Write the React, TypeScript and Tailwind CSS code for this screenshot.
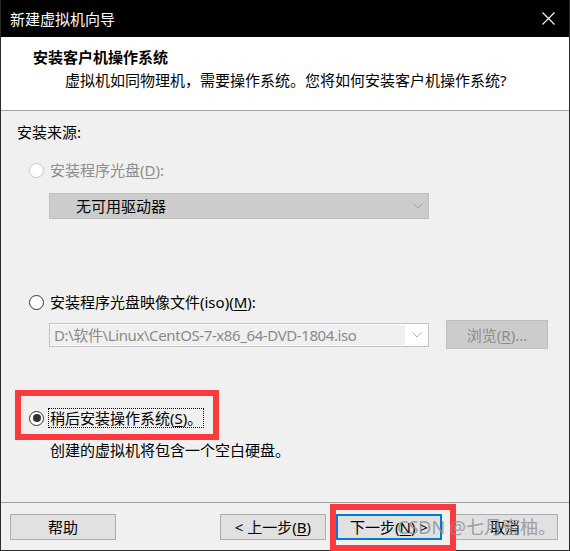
import React from "react";

const Radio = ({ checked = false, disabled = false }: { checked?: boolean; disabled?: boolean }) => (
    <span
        className={
            "flex h-[15px] w-[15px] shrink-0 items-center justify-center rounded-full border bg-white " +
            (disabled ? "border-[#c6c6c6]" : "border-[#333333]")
        }
    >
        {checked && <span className="h-[8px] w-[8px] rounded-full bg-[#333333]"></span>}
    </span>
);

const Chevron = ({ color }: { color: string }) => (
    <svg width="10" height="6" viewBox="0 0 10 6" fill="none" stroke={color} strokeWidth="1">
        <path d="M0.5 0.5 L5 5 L9.5 0.5" />
    </svg>
);

const Button = ({ children, focused = false }: { children: React.ReactNode; focused?: boolean }) => (
    <div
        className={
            "flex h-[26px] w-[106px] items-center justify-center bg-[#e1e1e1] text-black " +
            (focused ? "border-2 border-[#0078d7]" : "border border-[#adadad]")
        }
    >
        {children}
    </div>
);

export default function App() {
    return (
        <div
            className="relative flex h-[551px] w-[570px] flex-col border-x border-b border-[#2b2b2b] bg-[#f0f0f0] text-[15px] leading-[20px] text-black"
            style={{ fontFamily: '"Noto Sans", "Noto Sans CJK SC", sans-serif' }}
        >
            {/* title bar */}
            <div className="flex h-[37px] shrink-0 items-center justify-between bg-black pl-[9px] pr-[14px] text-white">
                <span>新建虚拟机向导</span>
                <svg width="13" height="13" viewBox="0 0 13 13" stroke="white" strokeWidth="1.1">
                    <path d="M0.5 0.5 L12.5 12.5 M12.5 0.5 L0.5 12.5" />
                </svg>
            </div>

            {/* header */}
            <div className="flex h-[74px] shrink-0 flex-col border-b border-[#a0a0a0] bg-white pt-[10px]">
                <p className="pl-[32px] font-bold">安装客户机操作系统</p>
                <p className="mt-[3px] pl-[64px]">虚拟机如同物理机，需要操作系统。您将如何安装客户机操作系统?</p>
            </div>

            {/* body */}
            <div className="flex flex-1 flex-col">
                <p className="mt-[11px] pl-[16px]">安装来源:</p>

                <div className="mt-[18px] flex items-center gap-[6px] pl-[28px] text-[#8c8c8c]">
                    <Radio disabled />
                    <span>
                        安装程序光盘(<span className="underline underline-offset-2">D</span>):
                    </span>
                </div>

                <div className="ml-[48px] mt-[13px] flex h-[26px] w-[380px] items-center justify-between border border-[#bfbfbf] bg-[#cccccc] pl-[26px] pr-[5px]">
                    <span>无可用驱动器</span>
                    <Chevron color="#a6a6a6" />
                </div>

                <div className="mt-[73px] flex items-center gap-[6px] pl-[28px]">
                    <Radio />
                    <span>
                        安装程序光盘映像文件(iso)(<span className="underline underline-offset-2">M</span>):
                    </span>
                </div>

                <div className="ml-[48px] mt-[8px] flex items-center gap-[17px]">
                    <div className="flex h-[24px] w-[380px] items-center border border-[#c2c2c2] bg-white">
                        <div className="flex h-[20px] w-[355px] items-center bg-[#f0f0f0] pl-[4px] tracking-[-0.4px] text-[#8a8a8a]">
                            D:\软件\Linux\CentOS-7-x86_64-DVD-1804.iso
                        </div>
                        <div className="flex flex-1 justify-center">
                            <Chevron color="#b0b0b0" />
                        </div>
                    </div>
                    <div className="flex h-[29px] w-[102px] items-center justify-center border border-[#bfbfbf] bg-[#cccccc] text-[#8c8c8c]">
                        浏览(<span className="underline underline-offset-2">R</span>)...
                    </div>
                </div>

                <div className="mt-[59px] flex items-center gap-[4px] pl-[28px]">
                    <Radio checked />
                    <span className="border border-dotted border-black px-[1px] leading-[18px]">
                        稍后安装操作系统(<span className="underline underline-offset-2">S</span>)。
                    </span>
                </div>

                <p className="mt-[12px] pl-[49px]">创建的虚拟机将包含一个空白硬盘。</p>
            </div>

            {/* footer */}
            <div className="flex h-[48px] shrink-0 items-start justify-between border-t border-[#a0a0a0] pl-[9px] pr-[11px] pt-[11px]">
                <Button>帮助</Button>
                <div className="flex gap-[10px]">
                    <Button>
                        &lt; 上一步(<span className="underline underline-offset-2">B</span>)
                    </Button>
                    <Button focused>
                        下一步(<span className="underline underline-offset-2">N</span>) &gt;
                    </Button>
                    <Button>取消</Button>
                </div>
            </div>

            {/* annotations */}
            <div className="absolute left-[14px] top-[390px] h-[50px] w-[204px] border-[6px] border-[#fb3b3b]"></div>
            <div className="absolute left-[329px] top-[504px] h-[47px] w-[126px] border-[6px] border-[#fb3b3b]"></div>
            <div className="absolute left-[396px] top-[515px] text-[18px] leading-[24px] text-[#8f8f8f] opacity-80">
                CSDN @七月蜜柚。
            </div>
        </div>
    );
}
